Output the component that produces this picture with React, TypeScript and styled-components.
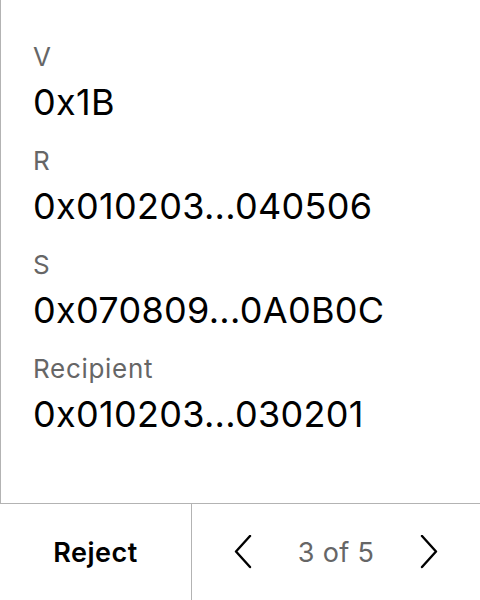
import React from "react";
import styled, { createGlobalStyle } from "styled-components";

const Global = createGlobalStyle`
  html, body { margin: 0; padding: 0; background: #fff; }
  body { font-family: Inter, "Noto Sans", sans-serif; }
`;

const Screen = styled.div`
  width: 480px;
  height: 600px;
  display: flex;
  flex-direction: column;
  box-sizing: border-box;
`;

const Body = styled.div`
  flex: 1;
  border-left: 1px solid #b3b3b3;
  border-bottom: 1px solid #b3b3b3;
  padding: 40px 0 0 32px;
  display: flex;
  flex-direction: column;
  gap: 20px;
`;

const Field = styled.div`
  display: flex;
  flex-direction: column;
  gap: 6px;
`;

const Label = styled.div`
  font-size: 26px;
  line-height: 34px;
  letter-spacing: 0.7px;
  color: #666;
`;

const Value = styled.div`
  font-size: 36px;
  line-height: 44px;
  letter-spacing: 0.3px;
  color: #000;
`;

const Footer = styled.div`
  height: 96px;
  display: flex;
`;

const RejectButton = styled.button`
  width: 192px;
  border: none;
  border-right: 1px solid #b3b3b3;
  background: none;
  font-family: Inter, sans-serif;
  font-size: 27px;
  font-weight: 600;
  letter-spacing: 0.5px;
  color: #000;
  padding: 0;
`;

const Pager = styled.div`
  flex: 1;
  display: flex;
  align-items: center;
  justify-content: space-between;
  padding: 0 42px 0 42px;
`;

const Arrow = styled.button`
  border: none;
  background: none;
  padding: 0;
  width: 18px;
  height: 34px;
  display: flex;
  align-items: center;
  justify-content: center;
`;

const PageText = styled.span`
  font-size: 27px;
  letter-spacing: 0.3px;
  color: #666;
`;

const Chevron = ({ dir }: { dir: "left" | "right" }) => (
  <svg width="18" height="34" viewBox="0 0 18 34" fill="none">
    <path
      d={dir === "left" ? "M16 1 L2 16.5 L16 32" : "M2 1 L16 16.5 L2 32"}
      stroke="#000"
      strokeWidth="2.4"
      strokeLinecap="round"
      strokeLinejoin="round"
    />
  </svg>
);

const fields = [
  ["V", "0x1B"],
  ["R", "0x010203...040506"],
  ["S", "0x070809...0A0B0C"],
  ["Recipient", "0x010203...030201"],
];

export default function App() {
  return (
    <Screen>
      <Global />
      <Body>
        {fields.map(([l, v]) => (
          <Field key={l}>
            <Label>{l}</Label>
            <Value>{v}</Value>
          </Field>
        ))}
      </Body>
      <Footer>
        <RejectButton>Reject</RejectButton>
        <Pager>
          <Arrow aria-label="Previous">
            <Chevron dir="left" />
          </Arrow>
          <PageText>3 of 5</PageText>
          <Arrow aria-label="Next">
            <Chevron dir="right" />
          </Arrow>
        </Pager>
      </Footer>
    </Screen>
  );
}
